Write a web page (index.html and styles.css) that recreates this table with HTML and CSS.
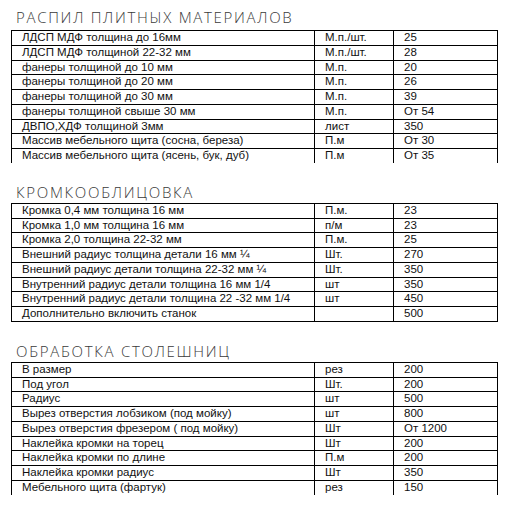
FILE: index.html
```html
<!DOCTYPE html>
<html lang="ru">
<head>
<meta charset="utf-8">
<title>Прайс</title>
<link rel="stylesheet" href="styles.css">
</head>
<body>
<div class="page">
  <section class="block">
    <h2 class="heading heading--first">РАСПИЛ ПЛИТНЫХ МАТЕРИАЛОВ</h2>
    <table class="price price--open">
      <tr><td>ЛДСП МДФ толщина до 16мм</td><td>М.п./шт.</td><td>25</td></tr>
      <tr><td>ЛДСП МДФ толщиной 22-32 мм</td><td>М.п./шт.</td><td>28</td></tr>
      <tr><td>фанеры толщиной до 10 мм</td><td>М.п.</td><td>20</td></tr>
      <tr><td>фанеры толщиной до 20 мм</td><td>М.п.</td><td>26</td></tr>
      <tr><td>фанеры толщиной до 30 мм</td><td>М.п.</td><td>39</td></tr>
      <tr><td>фанеры толщиной свыше 30 мм</td><td>М.п.</td><td>От 54</td></tr>
      <tr><td>ДВПО,ХДФ толщиной 3мм</td><td>лист</td><td>350</td></tr>
      <tr><td>Массив мебельного щита (сосна, береза)</td><td>П.м</td><td>От 30</td></tr>
      <tr><td>Массив мебельного щита (ясень, бук, дуб)</td><td>П.м</td><td>От 35</td></tr>
    </table>
  </section>
  <section class="block">
    <h2 class="heading">КРОМКООБЛИЦОВКА</h2>
    <table class="price">
      <tr><td>Кромка 0,4 мм толщина 16 мм</td><td>П.м.</td><td>23</td></tr>
      <tr><td>Кромка 1,0 мм толщина 16 мм</td><td>п/м</td><td>23</td></tr>
      <tr><td>Кромка 2,0 толщина 22-32 мм</td><td>П.м.</td><td>25</td></tr>
      <tr><td>Внешний радиус толщина детали 16 мм ¼</td><td>Шт.</td><td>270</td></tr>
      <tr><td>Внешний радиус детали толщина 22-32 мм ¼</td><td>Шт.</td><td>350</td></tr>
      <tr><td>Внутренний радиус детали толщина 16 мм 1/4</td><td>шт</td><td>350</td></tr>
      <tr><td>Внутренний радиус детали толщина 22 -32 мм 1/4</td><td>шт</td><td>450</td></tr>
      <tr><td>Дополнительно включить станок</td><td></td><td>500</td></tr>
    </table>
  </section>
  <section class="block">
    <h2 class="heading">ОБРАБОТКА СТОЛЕШНИЦ</h2>
    <table class="price price--open">
      <tr><td>В размер</td><td>рез</td><td>200</td></tr>
      <tr><td>Под угол</td><td>Шт.</td><td>200</td></tr>
      <tr><td>Радиус</td><td>шт</td><td>500</td></tr>
      <tr><td>Вырез отверстия лобзиком (под мойку)</td><td>шт</td><td>800</td></tr>
      <tr><td>Вырез отверстия фрезером ( под мойку)</td><td>Шт</td><td>От 1200</td></tr>
      <tr><td>Наклейка кромки на торец</td><td>Шт</td><td>200</td></tr>
      <tr><td>Наклейка кромки по длине</td><td>П.м</td><td>200</td></tr>
      <tr><td>Наклейка кромки радиус</td><td>Шт</td><td>350</td></tr>
      <tr><td>Мебельного щита (фартук)</td><td>рез</td><td>150</td></tr>
    </table>
  </section>
</div>
</body>
</html>
```

FILE: styles.css
```css
html, body {
  margin: 0;
  padding: 0;
  background: #ffffff;
}

.page {
  padding: 8px 0 0 11px;
  width: 486px;
}

.block + .block {
  margin-top: 20px;
}

.heading {
  margin: 0 0 2px 0;
  padding-left: 5px;
  font-family: "Open Sans", "DejaVu Sans", sans-serif;
  font-weight: 300;
  font-size: 15px;
  line-height: 18px;
  letter-spacing: 1.7px;
  color: #3a3a3a;
  white-space: nowrap;
}

.heading--first {
  margin-bottom: 4px;
}

.price {
  width: 486px;
  border-collapse: collapse;
  table-layout: fixed;
  font-family: "Liberation Sans", Arial, sans-serif;
  font-size: 11.5px;
  color: #111;
}

.price td {
  border-top: 1px solid #000;
  border-left: 1px solid #000;
  border-right: 1px solid #000;
  padding: 0 0 1.75px 10px;
  line-height: 12px;
  height: 12px;
  white-space: nowrap;
  overflow: hidden;
  vertical-align: top;
}

.price td:nth-child(1) { width: 292px; }
.price td:nth-child(2) { width: 68px; }
.price td:nth-child(3) { width: 93px; }

.price tr:last-child td {
  border-bottom: 1px solid #000;
}

.price--open tr:last-child td {
  border-bottom: none;
}
```
